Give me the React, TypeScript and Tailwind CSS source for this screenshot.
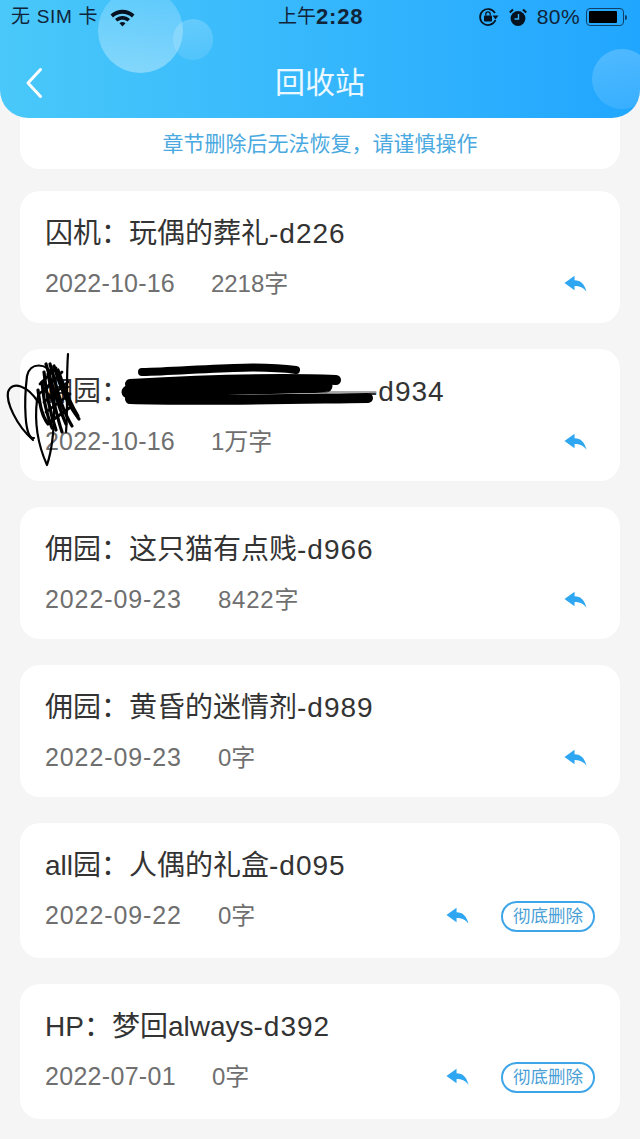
import React from 'react';

const font = { fontFamily: '"Liberation Sans", "Noto Sans CJK SC", sans-serif' };

const ReplyIcon = () => (
  <svg width="23" height="18" viewBox="0 0 24 18" className="shrink-0">
    <path d="M0.5 8 L11 0.5 V5 C17.5 5 21.5 9 23.5 17 C20 12.5 16.5 11 11 11 V15.5 Z" fill="#2ea6f2" />
  </svg>
);

const StatusBar = () => (
  <div className="relative flex h-[34px] items-center justify-between pl-[11px] pr-[13px] text-[19px] text-[#10243a]">
    <div className="flex items-center gap-[12px]">
      <span className="tracking-[0.7px]">无 SIM 卡</span>
      <svg width="25" height="19" viewBox="0 0 25 19">
        <path d="M0.5 6.5 C7 0 18 0 24.5 6.5 L22 9.5 C16.5 4.5 8.5 4.5 3 9.5 Z" fill="#06121f" />
        <path d="M5 11 C9.5 7 15.5 7 20 11 L17.6 13.6 C14.5 11 10.5 11 7.4 13.6 Z" fill="#06121f" />
        <path d="M9.5 15.2 C11.5 13.6 13.5 13.6 15.5 15.2 L12.5 18.5 Z" fill="#06121f" />
      </svg>
    </div>
    <span className="absolute left-[278px] top-[4px] flex items-center leading-[26px]">
      上午<span className="text-[22px] font-bold tracking-[0.8px]">2:28</span>
    </span>
    <div className="flex items-center">
      <svg width="21" height="20" viewBox="0 0 21 20" className="mr-[10px]">
        <path d="M17 6 A8 8 0 1 0 17.5 13" fill="none" stroke="#06121f" strokeWidth="1.7" />
        <path d="M14.5 8.5 L20.5 8.5 L17.5 12.5 Z" fill="#06121f" />
        <rect x="6" y="8.5" width="8" height="6" rx="1" fill="#06121f" />
        <path d="M7.8 8.5 V7 A2.2 2.2 0 0 1 12.2 7 V8.5" fill="none" stroke="#06121f" strokeWidth="1.3" />
      </svg>
      <svg width="18" height="19" viewBox="0 0 18 19" className="mr-[10px]">
        <circle cx="9" cy="10.5" r="7.4" fill="#06121f" />
        <path d="M9.5 6 V11 H5.5" fill="none" stroke="#38b4f8" strokeWidth="1.4" />
        <path d="M0.8 4.5 L4 1.5 M17.2 4.5 L14 1.5" stroke="#06121f" strokeWidth="2" />
      </svg>
      <span className="mr-[6px] text-[21px] tracking-[0.4px]">80%</span>
      <div className="flex items-center">
        <div className="flex h-[18px] w-[38px] items-center rounded-[4px] border border-[#10406a] p-[2px]">
          <div className="h-full w-[28px] rounded-[1px] bg-black" />
        </div>
        <div className="ml-[1px] h-[5px] w-[2px] rounded-r bg-[#10406a]" />
      </div>
    </div>
  </div>
);

const Header = () => (
  <div className="relative z-10 h-[118px] overflow-hidden rounded-b-[28px] bg-gradient-to-r from-[#49c8f9] to-[#21a6ff]">
    <div className="absolute left-[98px] top-[-12px] h-[85px] w-[85px] rounded-full bg-gradient-to-b from-white/15 to-white/35" />
    <div className="absolute left-[173px] top-[19px] h-[41px] w-[40px] rounded-full bg-gradient-to-b from-white/20 to-white/10" />
    <div className="absolute left-[592px] top-[49px] h-[60px] w-[60px] rounded-full bg-gradient-to-b from-white/20 to-white/10" />
    <StatusBar />
    <div className="relative flex h-[84px] items-start justify-center">
      <svg width="18" height="32" viewBox="0 0 18 32" className="absolute left-[25px] top-[33px]">
        <path d="M15.5 2.5 L3 16 L15.5 29.5" fill="none" stroke="white" strokeWidth="3" strokeLinecap="round" strokeLinejoin="round" />
      </svg>
      <span className="mt-[29px] text-[30px] leading-[40px] text-white/90">回收站</span>
    </div>
  </div>
);

type Row = {
  title: string;
  code: string;
  blacked?: boolean;
  date: string;
  dateTrack: string;
  count: string;
  countTrack?: string;
  purge?: boolean;
};

const rows: Row[] = [
  { title: '囚机：玩偶的葬礼', code: '-d226', date: '2022-10-16', dateTrack: 'tracking-[0.2px]', count: '2218字' },
  { title: '佣园：', code: '-d934', blacked: true, date: '2022-10-16', dateTrack: 'tracking-[0.2px]', count: '1万字' },
  { title: '佣园：这只猫有点贱', code: '-d966', date: '2022-09-23', dateTrack: 'tracking-[0.9px]', count: '8422字', countTrack: 'tracking-[0.8px]' },
  { title: '佣园：黄昏的迷情剂', code: '-d989', date: '2022-09-23', dateTrack: 'tracking-[0.9px]', count: '0字' },
  { title: 'all园：人偶的礼盒', code: '-d095', date: '2022-09-22', dateTrack: 'tracking-[0.9px]', count: '0字', purge: true },
  { title: 'HP：梦回always', code: '-d392', date: '2022-07-01', dateTrack: 'tracking-[0.3px]', count: '0字', purge: true },
];

// pen marks drawn over the second row
const Scribble = () => (
  <svg width="450" height="130" viewBox="0 0 450 130" className="pointer-events-none absolute left-0 top-[340px] z-10">
    <g fill="none" stroke="black" strokeLinecap="round" strokeLinejoin="round">
      <path d="M142 32 C190 31 250 24 296 30" strokeWidth="8" />
      <path d="M130 44 C200 40 280 38 336 40" strokeWidth="10" />
      <path d="M128 52 C200 48 270 48 326 46" strokeWidth="13" />
      <path d="M130 59 C200 61 290 59 368 58" strokeWidth="10" />
      <path d="M326 52 H376" stroke="#555" strokeWidth="1.2" />
      <path d="M68 14 C66 40 68 70 66 92" strokeWidth="2.2" />
      <path d="M47 125 C38 105 34 85 37 60 C40 45 52 50 54 70 C54 90 52 110 47 125" strokeWidth="2.2" />
      <path d="M33 100 C16 85 6 62 8 52 C12 40 28 46 38 62" strokeWidth="2.2" />
      <path d="M34 98 C24 100 24 60 27 36 C30 22 46 22 54 36" strokeWidth="2.2" />
      <path d="M46 24 C52 44 58 66 66 84 M50 24 C56 44 60 66 72 86 M44 32 C46 52 50 72 56 90 M54 26 C60 46 66 62 79 79 M42 42 C44 62 46 72 52 88 M58 30 C64 46 68 60 78 76 M48 34 C52 54 56 74 62 92 M38 50 C40 66 42 76 48 84" strokeWidth="3.2" />
      <path d="M42 52 L62 32 M44 62 L68 42 M46 72 L70 54 M50 82 L72 66 M40 44 L56 28" strokeWidth="2.8" />
    </g>
  </svg>
);

export default function App() {
  return (
    <div className="relative h-[1139px] w-[640px] overflow-hidden bg-[#f5f5f5]" style={font}>
      <Header />
      <Scribble />
      <div className="flex flex-col px-[20px]">
        <div className="flex h-[51px] items-start justify-center rounded-b-[20px] bg-white pt-[12px] text-[21px] leading-[28px] text-[#4aa9e0]">
          章节删除后无法恢复，请谨慎操作
        </div>
        <div className="mt-[22px] flex flex-col gap-[26px]">
          {rows.map((r) => (
            <div
              key={r.code}
              className={`flex flex-col rounded-[20px] bg-white px-[25px] pt-[24px] ${r.purge ? 'h-[135px]' : 'h-[132px]'}`}
            >
              <div className="h-[38px] whitespace-nowrap text-[28px] leading-[38px] text-[#333333]">
                {r.title}
                <span className={`tracking-[1px] ${r.blacked ? 'ml-[239px]' : ''}`}>{r.code}</span>
              </div>
              <div className="mt-[17px] flex h-[28px] items-center text-[25px] text-[#6f6f6f]">
                <span className={r.dateTrack}>{r.date}</span>
                <span className={`ml-[36px] text-[24px] ${r.countTrack ?? ''}`}>{r.count}</span>
                <div className="ml-auto flex items-center">
                  <div className={r.purge ? 'mr-[32px]' : 'mr-[8px]'}>
                    <ReplyIcon />
                  </div>
                  {r.purge && (
                    <div className="flex h-[31px] w-[94px] items-center justify-center rounded-full border-2 border-[#3da5e8] text-[17.5px] text-[#4a9fd6]">
                      彻底删除
                    </div>
                  )}
                </div>
              </div>
            </div>
          ))}
        </div>
      </div>
    </div>
  );
}
